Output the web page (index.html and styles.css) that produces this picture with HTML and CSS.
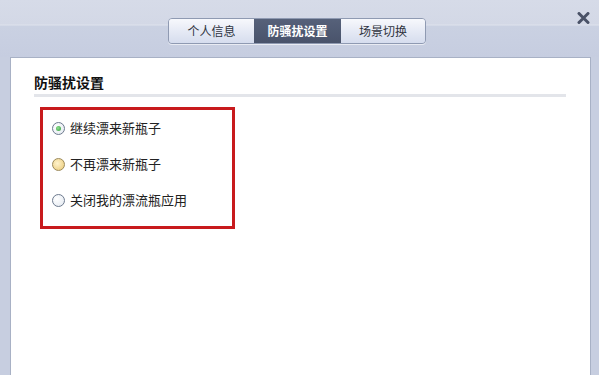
FILE: index.html
```html
<!DOCTYPE html>
<html lang="zh">
<head>
<meta charset="utf-8">
<link rel="stylesheet" href="styles.css">
</head>
<body>
<div class="window">
  <div class="topbar">
    <div class="tabs">
      <div class="tab t1">个人信息</div>
      <div class="tab t2 active">防骚扰设置</div>
      <div class="tab t3">场景切换</div>
    </div>
    <div class="close">
      <svg width="13" height="12" viewBox="0 0 13 12"><path d="M2 1.5 L11 10.5 M11 1.5 L2 10.5" stroke="#4a5267" stroke-width="3" stroke-linecap="round"/></svg>
    </div>
  </div>
  <div class="panel">
    <div class="title">防骚扰设置</div>
    <div class="divider"></div>
    <div class="options">
      <div class="opt"><span class="radio checked"></span><span class="label">继续漂来新瓶子</span></div>
      <div class="opt"><span class="radio hover"></span><span class="label">不再漂来新瓶子</span></div>
      <div class="opt"><span class="radio"></span><span class="label">关闭我的漂流瓶应用</span></div>
    </div>
  </div>
</div>
</body>
</html>
```
FILE: styles.css
```css
html, body {
  margin: 0;
  padding: 0;
}
body {
  width: 599px;
  height: 375px;
  overflow: hidden;
  background: #c7cee0;
  font-family: "Noto Sans CJK SC", "Noto Sans", sans-serif;
}
.window {
  display: flex;
  flex-direction: column;
  height: 375px;
}
.topbar {
  height: 57px;
  display: flex;
  align-items: flex-start;
  background: linear-gradient(#d6dbe8 0, #d3d8e6 24px, #dfe3ed 25px, #cad1e2 26px, #c6cde0 57px);
}
.tabs {
  display: flex;
  margin: 18px 0 0 168px;
  border: 1px solid #8f9ab2;
  border-radius: 4px;
  overflow: hidden;
  box-shadow: 0 1px 0 rgba(255,255,255,0.6);
}
.tab {
  height: 24px;
  line-height: 24px;
  text-align: center;
  font-size: 12px;
  color: #2f3440;
  background: linear-gradient(#f7f8fc, #e6eaf5 50%, #d6ddee);
}
.t1 { width: 85px; }
.t2 { width: 87px; }
.t3 { width: 84px; }
.tab.active {
  background: linear-gradient(#56617a, #49536b);
  color: #fff;
  font-weight: bold;
}
.close {
  margin: 12px 9px 0 auto;
  width: 13px;
  height: 12px;
}
.close svg {
  display: block;
}
.panel {
  flex: 1;
  margin: 0 8px 0 10px;
  background: #fff;
  border: 1px solid #a8b1c5;
  border-bottom: none;
  padding: 14px 24px 0 23px;
}
.title {
  font-size: 14px;
  font-weight: bold;
  line-height: 20px;
  color: #111;
}
.divider {
  margin-top: 2px;
  height: 3px;
  background: #e3e5ea;
}
.options {
  margin: 10px 0 0 6px;
  width: 189px;
  border: 3px solid #c81a1d;
  padding-bottom: 8px;
}
.opt {
  height: 36px;
  display: flex;
  align-items: center;
  padding-left: 9px;
}
.radio {
  width: 11px;
  height: 11px;
  border-radius: 50%;
  border: 1px solid #6d7a8e;
  background: radial-gradient(circle at 35% 35%, #ffffff, #e2e8f0);
  position: relative;
  flex: none;
}
.radio.checked::after {
  content: "";
  position: absolute;
  left: 3px;
  top: 3px;
  width: 5px;
  height: 5px;
  border-radius: 50%;
  background: radial-gradient(circle at 40% 40%, #8fe08f, #2f9a3a);
}
.radio.hover {
  border-color: #9c8a5a;
  background: radial-gradient(circle at 40% 40%, #fff3cc, #e9c875);
}
.label {
  margin-left: 5px;
  font-size: 13px;
  color: #222;
  line-height: 16px;
}
```
